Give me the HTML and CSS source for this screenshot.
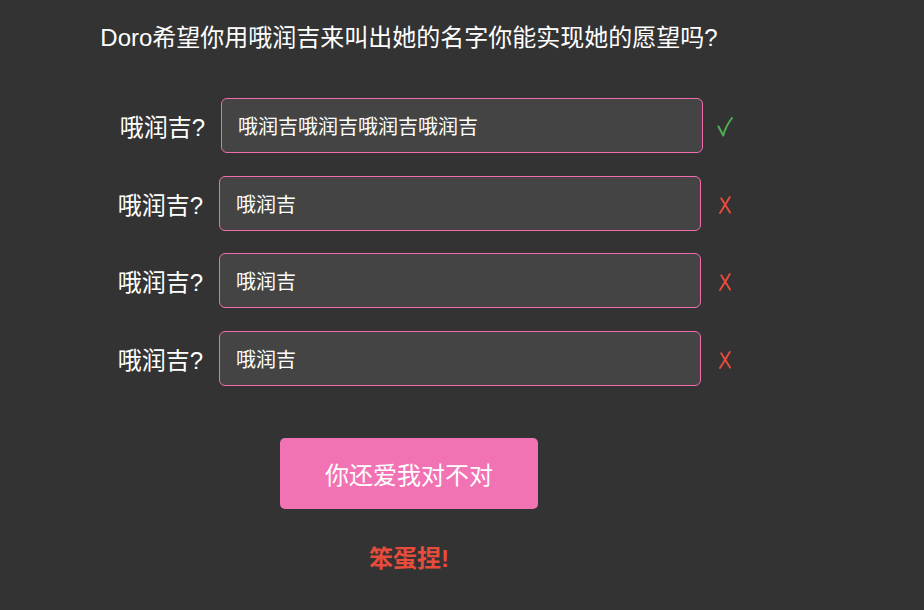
FILE: index.html
```html
<!DOCTYPE html>
<html lang="zh">
<head>
<meta charset="utf-8">
<link rel="stylesheet" href="styles.css">
</head>
<body>
<div class="app">
  <h1 class="title">Doro希望你用哦润吉来叫出她的名字你能实现她的愿望吗?</h1>
  <div class="rows">
    <div class="row">
      <label class="label">哦润吉?</label>
      <input class="field" type="text" value="哦润吉哦润吉哦润吉哦润吉">
      <svg class="mark ok" viewBox="0 0 16 20" width="16" height="20" aria-label="✓"><path d="M1.5 9.5 L6.2 18.5 Q9 8.5 15 1" fill="none" stroke="#4caf50" stroke-width="2" stroke-linecap="round" stroke-linejoin="round"/></svg>
    </div>
    <div class="row">
      <label class="label">哦润吉?</label>
      <input class="field" type="text" value="哦润吉">
      <svg class="mark bad" viewBox="0 0 12 18" width="12" height="18" aria-label="✗"><path d="M10.8 1 Q6.5 8.5 1 17 M2.2 2.2 L11 16.6" fill="none" stroke="#e74c3c" stroke-width="1.9" stroke-linecap="round"/></svg>
    </div>
    <div class="row">
      <label class="label">哦润吉?</label>
      <input class="field" type="text" value="哦润吉">
      <svg class="mark bad" viewBox="0 0 12 18" width="12" height="18" aria-label="✗"><path d="M10.8 1 Q6.5 8.5 1 17 M2.2 2.2 L11 16.6" fill="none" stroke="#e74c3c" stroke-width="1.9" stroke-linecap="round"/></svg>
    </div>
    <div class="row">
      <label class="label">哦润吉?</label>
      <input class="field" type="text" value="哦润吉">
      <svg class="mark bad" viewBox="0 0 12 18" width="12" height="18" aria-label="✗"><path d="M10.8 1 Q6.5 8.5 1 17 M2.2 2.2 L11 16.6" fill="none" stroke="#e74c3c" stroke-width="1.9" stroke-linecap="round"/></svg>
    </div>
  </div>
  <button class="btn" type="button">你还爱我对不对</button>
  <p class="result">笨蛋捏!</p>
</div>
</body>
</html>
```

FILE: styles.css
```css
html, body {
  background: #333333;
}
body {
  margin: 8px;
  color: #ffffff;
  font-family: "Liberation Sans", Arial, "Noto Sans CJK SC", sans-serif;
}
.app {
  width: 802px;
  display: flex;
  flex-direction: column;
  align-items: center;
  text-align: center;
}
.title {
  margin: 16px 0 0;
  font-size: 24px;
  font-weight: normal;
  line-height: 28px;
}
.rows {
  margin-top: 46px;
  display: flex;
  flex-direction: column;
  gap: 22.7px;
}
.row {
  display: flex;
  align-items: center;
  justify-content: center;
}
.label {
  width: 121px;
  margin-right: 16px;
  text-align: right;
  font-size: 24px;
}
.field {
  box-sizing: border-box;
  width: 482px;
  height: 55px;
  padding: 0 16px;
  background: #444444;
  border: 1px solid #f06cae;
  border-radius: 6px;
  color: #ffffff;
  font-family: "Liberation Sans", Arial, "Noto Sans CJK SC", sans-serif;
  font-size: 20px;
  outline: none;
}
.mark {
  display: block;
  flex: none;
}
.ok {
  margin: 3px 1px 0 14px;
}
.bad {
  margin: 3px 5px 0 18px;
}
.btn {
  margin-top: 52px;
  width: 258px;
  height: 71px;
  border: none;
  border-radius: 5px;
  background: #f273b4;
  color: #ffffff;
  font-family: "Liberation Sans", Arial, "Noto Sans CJK SC", sans-serif;
  font-size: 24px;
}
.result {
  margin: 30px 0 0;
  color: #e74c3c;
  font-size: 24px;
  font-weight: bold;
}
```
